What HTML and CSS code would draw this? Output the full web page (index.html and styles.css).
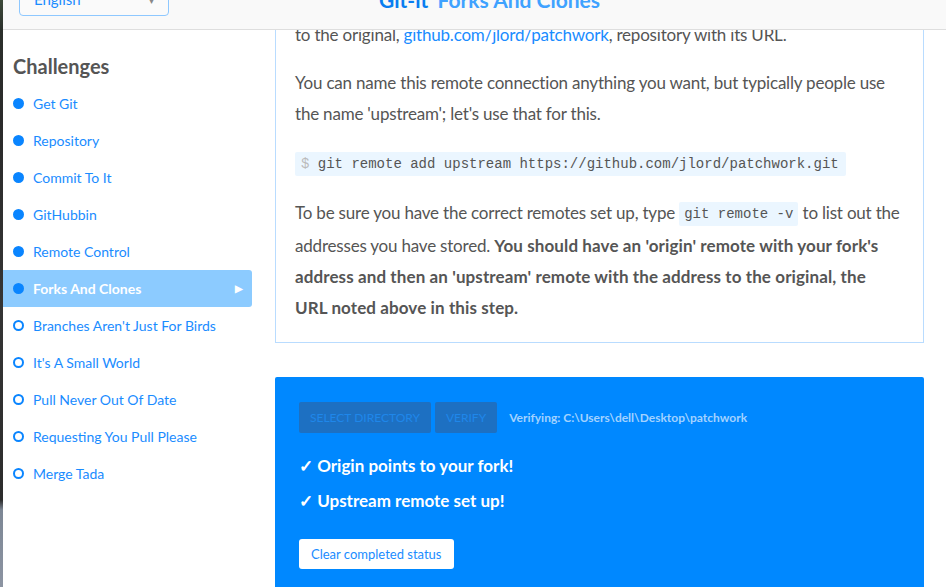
FILE: index.html
```html
<!DOCTYPE html>
<html lang="en">
<head>
<meta charset="utf-8">
<title>Git-it · Forks And Clones</title>
<link rel="stylesheet" href="styles.css">
</head>
<body>
<div class="screen">
  <div class="desk"></div>
  <div class="window">
    <header class="topbar">
      <div class="lang">
        <span class="lang-text">English</span>
        <span class="lang-arrow">▾</span>
      </div>
      <h1 class="title"><span class="app">Git-it</span> <span class="chal">Forks And Clones</span></h1>
    </header>
    <div class="body">
      <nav class="sidebar">
        <h2 class="side-head">Challenges</h2>
        <ul class="chal-list">
          <li class="item done"><span class="dot"></span>Get Git</li>
          <li class="item done"><span class="dot"></span>Repository</li>
          <li class="item done"><span class="dot"></span>Commit To It</li>
          <li class="item done"><span class="dot"></span>GitHubbin</li>
          <li class="item done"><span class="dot"></span>Remote Control</li>
          <li class="item done current"><span class="dot"></span>Forks And Clones<span class="arrow">▶</span></li>
          <li class="item"><span class="dot"></span>Branches Aren't Just For Birds</li>
          <li class="item"><span class="dot"></span>It's A Small World</li>
          <li class="item"><span class="dot"></span>Pull Never Out Of Date</li>
          <li class="item"><span class="dot"></span>Requesting You Pull Please</li>
          <li class="item"><span class="dot"></span>Merge Tada</li>
        </ul>
      </nav>
      <main class="main">
        <section class="card">
          <p class="first">to the original, <a class="link">github.com/jlord/patchwork</a>, repository with its URL.</p>
          <p>You can name this remote connection anything you want, but typically people use the name 'upstream'; let's use that for this.</p>
          <pre class="code"><span class="prompt">$</span> git remote add upstream https://github.com/jlord/patchwork.git</pre>
          <p>To be sure you have the correct remotes set up, type <code class="inline">git remote -v</code> to list out the addresses you have stored. <strong>You should have an 'origin' remote with your fork's address and then an 'upstream' remote with the address to the original, the<br>URL noted above in this step.</strong></p>
        </section>
        <section class="verify">
          <div class="controls">
            <button class="btn-dim">SELECT DIRECTORY</button>
            <button class="btn-dim">VERIFY</button>
            <span class="verifying">Verifying: C:\Users\dell\Desktop\patchwork</span>
          </div>
          <ul class="results">
            <li>✓ Origin points to your fork!</li>
            <li>✓ Upstream remote set up!</li>
          </ul>
          <button class="btn-clear">Clear completed status</button>
        </section>
      </main>
    </div>
  </div>
</div>
</body>
</html>
```

FILE: styles.css
```css
* { box-sizing: border-box; }
html, body { margin: 0; padding: 0; }
body {
  width: 946px;
  height: 587px;
  overflow: hidden;
  background: #fff;
  font-family: "Lato", "Noto Sans", sans-serif;
}
.screen {
  display: flex;
  height: 587px;
}
.desk {
  width: 3px;
  flex: none;
  background: linear-gradient(to bottom, #3d4a3a 0, #2b2f2b 30px, #2a2a2a 120px, #353535 300px, #2c2c2c 500px, #7d8795 510px, #8c94a2 587px);
}
.window {
  flex: 1;
  display: flex;
  flex-direction: column;
  min-width: 0;
}
.topbar {
  height: 30px;
  flex: none;
  background: #f9f9f9;
  border-bottom: 1px solid #dedede;
  display: flex;
  align-items: flex-start;
  overflow: hidden;
}
.lang {
  margin-left: 16px;
  margin-top: -16px;
  width: 150px;
  height: 32px;
  border: 1px solid #8ec8ff;
  border-radius: 4px;
  background: #fafafa;
  display: flex;
  align-items: center;
  justify-content: space-between;
  padding: 0 14px 0 14px;
}
.lang-text {
  color: #1a8cff;
  font-size: 15px;
  margin-top: -2px;
}
.lang-arrow {
  color: #888;
  font-size: 10px;
}
.title {
  margin: -15px 0 0 210px;
  font-size: 21px;
  font-weight: 700;
  line-height: 30px;
  white-space: nowrap;
}
.title .app { color: #0a7ef0; }
.title .chal { color: #3fa2ff; margin-left: 4px; }

.body {
  flex: 1;
  display: flex;
  min-height: 0;
}
.sidebar {
  width: 272px;
  flex: none;
  padding-right: 23px;
  background: #fff;
}
.side-head {
  margin: 0;
  padding: 22px 0 0 10px;
  height: 55px;
  font-size: 20px;
  font-weight: 700;
  line-height: 28px;
  color: #555;
}
.chal-list {
  list-style: none;
  margin: 0;
  padding: 0;
}
.item {
  height: 37px;
  display: flex;
  align-items: center;
  padding-left: 10px;
  padding-bottom: 1px;
  font-size: 14px;
  color: #1a8cff;
  border-radius: 0 3px 3px 0;
}
.dot {
  width: 11px;
  height: 11px;
  border-radius: 50%;
  border: 2px solid #0a85ff;
  background: #fff;
  margin-right: 9px;
  flex: none;
}
.item.done .dot { background: #0a85ff; }
.item.current {
  background: #8ccbff;
  color: #fff;
  font-weight: 700;
}
.arrow {
  margin-left: auto;
  margin-right: 9px;
  font-size: 10px;
  color: #fff;
}

.main {
  flex: 1;
  min-width: 0;
  padding-right: 22px;
  overflow: hidden;
}
.card {
  margin-top: -11px;
  border: 1px solid #b9dcff;
  border-top: none;
  padding: 0 19px 19px 19px;
  font-size: 17px;
  line-height: 31px;
  color: #555;
  letter-spacing: -0.2px;
}
.card p { margin: 0 0 17px 0; }
.card p:last-child { margin-bottom: 0; }
.link { color: #1a8cff; text-decoration: none; }
.card strong { font-weight: 700; letter-spacing: 0.1px; }
.code {
  margin: 1px 0 21px 0;
  display: inline-block;
  background: #ebf6ff;
  border-radius: 2px;
  padding: 0 7px 0 6px;
  font-family: "Liberation Mono", monospace;
  font-size: 14px;
  line-height: 24px;
  color: #555;
  letter-spacing: 0;
}
.prompt { color: #bbb; }
.inline {
  font-family: "Liberation Mono", monospace;
  font-size: 14px;
  background: #ebf6ff;
  padding: 4px 5px;
  border-radius: 2px;
  letter-spacing: 0;
  vertical-align: 1px;
}
.verify {
  margin-top: 34px;
  background: #0088ff;
  padding: 25px 24px 30px 24px;
  border-radius: 2px 2px 0 0;
  height: 240px;
}
.controls {
  display: flex;
  align-items: center;
  gap: 4px;
}
.btn-dim {
  height: 31px;
  border: none;
  border-radius: 2px;
  background: #1d70c2;
  color: #1f87ea;
  font-family: "Lato", sans-serif;
  font-size: 12px;
  padding: 0 11px;
}
.verifying {
  margin-left: 8px;
  color: #a2d2ff;
  font-size: 12px;
  font-weight: 700;
}
.results {
  list-style: none;
  margin: 15px 0 0 0;
  padding: 0;
  color: #fff;
  font-size: 17px;
  font-weight: 700;
  line-height: 35px;
}
.btn-clear {
  margin-top: 21px;
  height: 30px;
  border: none;
  border-radius: 3px;
  background: #fff;
  color: #1a8cff;
  font-family: "Lato", sans-serif;
  font-size: 13px;
  padding: 0 12px;
}
```
